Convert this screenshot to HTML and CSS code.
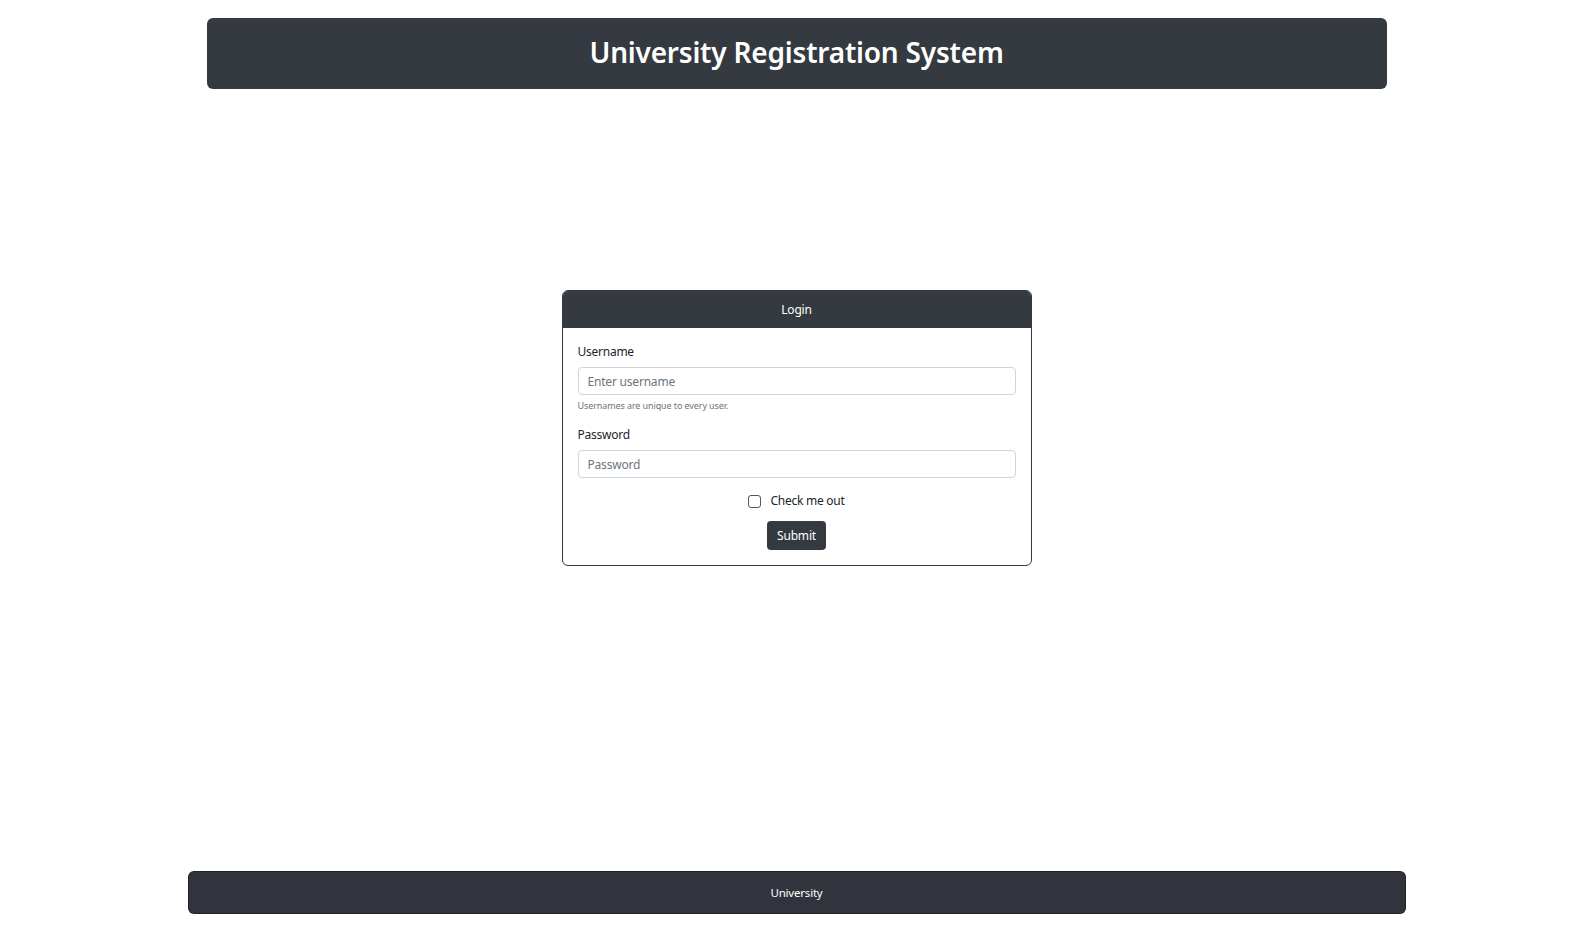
FILE: index.html
```html
<!DOCTYPE html>
<html lang="en">
<head>
<meta charset="utf-8">
<title>University Registration System</title>
<link rel="stylesheet" href="styles.css">
</head>
<body>
<div class="page">
  <header class="topbar">
    <h1 class="title">University Registration System</h1>
  </header>
  <main class="main">
    <form class="card">
      <div class="card-header">Login</div>
      <div class="card-body">
        <div class="field">
          <label class="label" for="username">Username</label>
          <input class="input" id="username" type="text" placeholder="Enter username">
          <small class="help">Usernames are unique to every user.</small>
        </div>
        <div class="field">
          <label class="label" for="password">Password</label>
          <input class="input" id="password" type="password" placeholder="Password">
        </div>
        <div class="check">
          <span class="box"></span>
          <span class="check-label">Check me out</span>
        </div>
        <div class="actions">
          <button class="btn" type="button">Submit</button>
        </div>
      </div>
    </form>
  </main>
  <footer class="footer">University</footer>
</div>
</body>
</html>
```
FILE: styles.css
```css
* { box-sizing: border-box; }
html, body { margin: 0; padding: 0; background: #fff; }
body {
  font-family: "Noto Sans", "Open Sans", sans-serif;
  color: #212529;
  overflow: hidden;
}
.page {
  min-height: 928px;
  padding-left: 14px;
  display: flex;
  flex-direction: column;
  align-items: center;
}
.topbar {
  width: 1180px;
  height: 71px;
  margin-top: 18px;
  padding-bottom: 3px;
  background: #343a40;
  border-radius: 6px;
  display: flex;
  align-items: center;
  justify-content: center;
}
.title {
  margin: 0;
  color: #fff;
  font-size: 28px;
  font-weight: 600;
  letter-spacing: -0.2px;
}
.main {
  flex: 1;
  display: flex;
  justify-content: center;
  align-items: flex-start;
}
.card {
  margin-top: 201px;
  width: 470px;
  border: 1px solid #343a40;
  border-radius: 6px;
  overflow: hidden;
}
.card-header {
  height: 37px;
  background: #343a40;
  color: #fff;
  font-size: 12px;
  letter-spacing: -0.2px;
  display: flex;
  align-items: center;
  justify-content: center;
}
.card-body {
  padding: 15px 15px 15px;
}
.field {
  display: flex;
  flex-direction: column;
}
.field + .field { margin-top: 13px; }
.label {
  font-size: 12px;
  letter-spacing: -0.25px;
  line-height: 18px;
  margin-bottom: 6px;
}
.input {
  height: 28px;
  border: 1px solid #ced4da;
  border-radius: 4px;
  padding: 0 9px;
  font-family: inherit;
  font-size: 12px;
  letter-spacing: -0.2px;
  color: #495057;
}
.input::placeholder { color: #6c757d; }
.help {
  margin-top: 3px;
  font-size: 9px;
  letter-spacing: -0.1px;
  line-height: 15px;
  color: #6c757d;
}
.check {
  margin-top: 14px;
  display: flex;
  align-items: center;
  justify-content: center;
  gap: 9px;
}
.box {
  width: 13px;
  height: 13px;
  border: 1px solid #555;
  border-radius: 3px;
  background: #fff;
}
.check-label {
  font-size: 12px;
  letter-spacing: -0.25px;
  line-height: 18px;
}
.actions {
  margin-top: 11px;
  display: flex;
  justify-content: center;
}
.btn {
  height: 29px;
  padding: 0 10px;
  border: none;
  border-radius: 4px;
  background: #343a40;
  color: #fff;
  font-family: inherit;
  font-size: 12px;
  letter-spacing: -0.2px;
}
.footer {
  width: 1218px;
  height: 43px;
  margin-bottom: 14px;
  background: #31343c;
  border: 1px dotted #111;
  border-radius: 6px;
  color: #fff;
  font-size: 11.5px;
  letter-spacing: -0.2px;
  display: flex;
  align-items: center;
  justify-content: center;
}
```
